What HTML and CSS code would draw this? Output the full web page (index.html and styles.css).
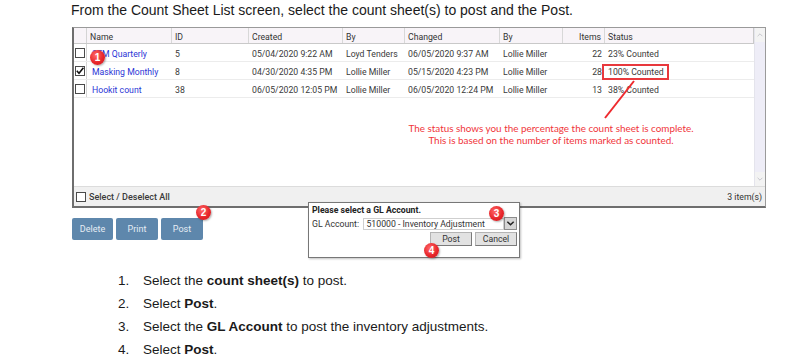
FILE: index.html
```html
<!DOCTYPE html>
<html>
<head>
<meta charset="utf-8">
<link rel="stylesheet" href="styles.css">
</head>
<body>
<main class="page">
  <p class="intro">From the Count Sheet List screen, select the count sheet(s) to post and the Post.</p>
  <section class="shot">
    <div class="grid">
      <div class="grid-main">
        <div class="table">
          <div class="row head">
            <span class="c cb"></span><span class="c">Name</span><span class="c">ID</span><span class="c">Created</span><span class="c">By</span><span class="c">Changed</span><span class="c">By</span><span class="c num">Items</span><span class="c">Status</span>
          </div>
          <div class="row">
            <span class="c cb"><i class="box"></i></span><span class="c link">SFM Quarterly</span><span class="c">5</span><span class="c">05/04/2020 9:22 AM</span><span class="c">Loyd Tenders</span><span class="c">06/05/2020 9:37 AM</span><span class="c">Lollie Miller</span><span class="c num">22</span><span class="c">23% Counted</span>
          </div>
          <div class="row">
            <span class="c cb"><i class="box checked"><svg viewBox="0 0 10 10" width="10" height="10"><path d="M1.8 4.8 L4 7.2 L8.4 1.8" fill="none" stroke="#111" stroke-width="1.6"/></svg></i></span><span class="c link">Masking Monthly</span><span class="c">8</span><span class="c">04/30/2020 4:35 PM</span><span class="c">Lollie Miller</span><span class="c">05/15/2020 4:23 PM</span><span class="c">Lollie Miller</span><span class="c num">28</span><span class="c">100% Counted</span>
          </div>
          <div class="row">
            <span class="c cb"><i class="box"></i></span><span class="c link">Hookit count</span><span class="c">38</span><span class="c">06/05/2020 12:05 PM</span><span class="c">Lollie Miller</span><span class="c">06/05/2020 12:24 PM</span><span class="c">Lollie Miller</span><span class="c num">13</span><span class="c">38% Counted</span>
          </div>
          <div class="rest"></div>
        </div>
        <div class="scroll">
          <span class="sbtn"><svg viewBox="0 0 10 10" width="8" height="8"><path d="M2 6.5 L5 3.5 L8 6.5" fill="none" stroke="#c4c4cc" stroke-width="1.2"/></svg></span>
          <span class="sbtn"><svg viewBox="0 0 10 10" width="8" height="8"><path d="M2 3.5 L5 6.5 L8 3.5" fill="none" stroke="#c4c4cc" stroke-width="1.2"/></svg></span>
        </div>
      </div>
      <div class="foot">
        <span class="all"><i class="box"></i>Select / Deselect All</span>
        <span class="count">3 item(s)</span>
      </div>
      <span class="hilite"></span>
      <svg class="pointer" width="100" height="60" viewBox="0 0 100 60"><line x1="88" y1="1" x2="59" y2="38" stroke="#ee2a2e" stroke-width="2"/></svg>
      <p class="note">The status shows you the percentage the count sheet is complete.<br>This is based on the number of items marked as counted.</p>
    </div>
    <div class="buttons">
      <span class="btn">Delete</span>
      <span class="btn">Print</span>
      <span class="btn">Post</span>
    </div>
    <div class="dialog">
      <p class="dtitle">Please select a GL Account.</p>
      <div class="drow">
        <span class="dlabel">GL Account:</span>
        <span class="select">510000 - Inventory Adjustment</span>
        <span class="dd"><svg viewBox="0 0 10 10" width="9" height="9"><path d="M1.5 3 L5 6.5 L8.5 3" fill="none" stroke="#222" stroke-width="1.6"/></svg></span>
      </div>
      <div class="dbtns">
        <span class="gbtn">Post</span>
        <span class="gbtn">Cancel</span>
      </div>
    </div>
    <span class="badge b1">1</span>
    <span class="badge b2">2</span>
    <span class="badge b3">3</span>
    <span class="badge b4">4</span>
  </section>
  <ol class="steps">
    <li>Select the <b>count sheet(s)</b> to post.</li>
    <li>Select <b>Post</b>.</li>
    <li>Select the <b>GL Account</b> to post the inventory adjustments.</li>
    <li>Select <b>Post</b>.</li>
  </ol>
</main>
</body>
</html>
```

FILE: styles.css
```css
* { box-sizing: border-box; }
html, body { margin: 0; padding: 0; background: #fff; }
.page { width: 785px; height: 364px; overflow: hidden; font-family: "Liberation Sans", Arial, sans-serif; color: #222; }

.intro { margin: 0 0 0 71px; padding-top: 2px; font-size: 14px; line-height: 17px; color: #1a1a1a; }

.shot { position: relative; margin: 8px 0 0 72px; width: 460px; }

.grid { position: relative; width: 694px; border: 1px solid #9a9a9a; border-left: 2px solid #6e6e6e; border-bottom: 2px solid #6e6e6e; font-family: Roboto, "Liberation Sans", sans-serif; font-size: 8.7px; color: #3a3a3a; }
.grid-main { display: flex; height: 158px; }
.table { flex: 1; display: flex; flex-direction: column; }
.row { display: grid; grid-template-columns: 13px 85px 77px 94px 62px 95px 63px 42px 148px; height: 18px; align-items: center; border-bottom: 1px solid #ececec; }
.row > .c { padding-top: 2px; }
.row.head { height: 16px; background: #f8f4f8; border: 1px solid #c9c9c9; border-top: none; border-left: none; }
.head .c { height: 100%; display: flex; align-items: center; border-right: 1px solid #d8d8d8; color: #333; padding-top: 2px; }
.head .c.num { justify-content: flex-end; }
.head .c:last-child { border-right: none; }
.c { padding: 0 3px; white-space: nowrap; overflow: hidden; }
.c.cb { padding: 0; height: 100%; display: flex; align-items: center; justify-content: center; border-right: 1px solid #d4d4d4; }
.row > .c.cb { padding-top: 0; }
.c.num { text-align: right; padding-right: 3px; }
.c.link { color: #2b35d6; padding-left: 5px; }
.rest { flex: 1; }

.box { display: inline-block; width: 10px; height: 10px; border: 1px solid #4a4a4a; background: #fff; position: relative; }
.box svg { position: absolute; left: -1px; top: -1px; }

.scroll { width: 12px; background: #eeedf7; display: flex; flex-direction: column; justify-content: space-between; border-left: 1px solid #e4e4ec; }
.sbtn { height: 14px; display: flex; align-items: center; justify-content: center; background: #f3f3f3; }

.foot { height: 20px; display: flex; align-items: center; justify-content: space-between; background: #f0f0f0; border-top: 1px solid #dcdcdc; padding: 1px 3px 0 2px; color: #333; }
.all { display: flex; align-items: center; gap: 3px; font-weight: 500; color: #3a3a3a; font-size: 9px; }
.count { color: #333; }

.hilite { position: absolute; left: 528px; top: 36px; width: 67px; height: 16px; border: 2px solid #e8383d; }
.pointer { position: absolute; left: 472px; top: 52px; }
.note { position: absolute; left: 297px; top: 94px; width: 360px; margin: 0; text-align: center; color: #f0353a; font-family: Lato, "Open Sans", sans-serif; font-size: 9.9px; line-height: 12px; }

.buttons { display: flex; gap: 3px; margin-top: 10px; }
.btn { width: 41px; height: 22px; display: flex; align-items: center; justify-content: center; background: #5e87ac; color: #e6edf4; border-radius: 2px; font-family: Roboto, "Liberation Sans", sans-serif; font-size: 9px; }
.btn + .btn { width: 42px; }

.dialog { position: absolute; left: 236px; top: 175px; width: 212px; height: 56px; background: #fff; border: 1px solid #777; box-shadow: 1px 1px 2px rgba(0,0,0,0.25); padding: 2px 2px 0 3px; font-family: Roboto, "Liberation Sans", sans-serif; font-size: 8.7px; color: #222; }
.dtitle { margin: 0; font-weight: 700; line-height: 11px; }
.drow { display: flex; align-items: center; margin-top: 1px; height: 13px; }
.dlabel { width: 52px; color: #333; }
.select { width: 142px; height: 12px; border: 1px solid #cfcfcf; padding-left: 2px; line-height: 10px; color: #333; }
.dd { width: 13px; height: 13px; background: #d6d6d6; border: 1px solid #8c8c8c; display: flex; align-items: center; justify-content: center; }
.dbtns { display: flex; justify-content: flex-end; gap: 3px; margin-top: 2px; }
.gbtn { width: 42px; height: 14px; display: flex; align-items: center; justify-content: center; background: #e2e2e2; border: 1px solid #b4b4b4; border-right-color: #7a7a7a; border-bottom-color: #7a7a7a; color: #333; }

.badge { position: absolute; width: 15px; height: 15px; border-radius: 50%; background: radial-gradient(circle at 40% 35%, #ff6a6a 0%, #e8262b 55%, #c71a1f 100%); color: #fff; font-family: "Liberation Sans", Arial, sans-serif; font-weight: 700; font-size: 10px; line-height: 15px; text-align: center; box-shadow: 1px 1px 2px rgba(0,0,0,0.3); }
.b1 { left: 18px; top: 23px; }
.b2 { left: 124px; top: 178px; }
.b3 { left: 417px; top: 179px; }
.b4 { left: 352px; top: 216px; }

.steps { list-style: none; counter-reset: step; margin: 29px 0 0 118px; padding: 0; font-size: 13.5px; line-height: 23px; color: #1a1a1a; }
.steps li { counter-increment: step; }
.steps li::before { content: counter(step) "."; display: inline-block; width: 25px; }
```
